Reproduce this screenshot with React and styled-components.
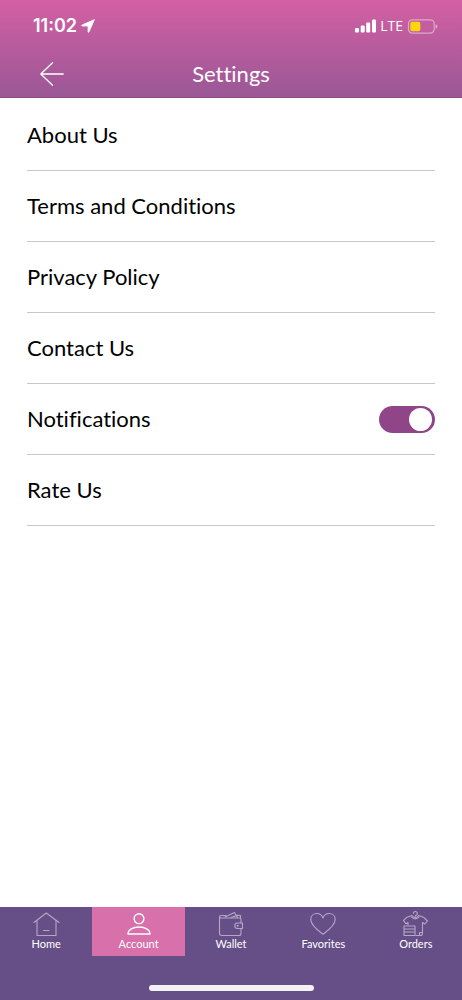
import React, { useState } from "react";
import styled, { createGlobalStyle } from "styled-components";

const GlobalStyle = createGlobalStyle`
  *, *::before, *::after { box-sizing: border-box; }
  body {
    margin: 0;
    background: #fff;
    color: #000;
    font-family: Lato, "Liberation Sans", sans-serif;
    font-variant-ligatures: none;
  }
`;

const Screen = styled.div`
  display: flex;
  flex-direction: column;
  min-height: 100vh;
`;

const Header = styled.header`
  color: #fff;
  background: linear-gradient(#d360a3, #9a5796);
  border-bottom: 1px solid #8e4c8c;
`;

const StatusBar = styled.div`
  display: flex;
  align-items: center;
  justify-content: space-between;
  height: 50px;
  padding: 2px 24px 0 33px;
`;

const StatusGroup = styled.div`
  display: flex;
  align-items: center;
  gap: 4px;
`;

const Clock = styled.span`
  font: 600 18px/24px Inter, sans-serif;
`;

const Carrier = styled.span`
  font: 400 14px/20px "Open Sans", sans-serif;
`;

const TitleBar = styled.div`
  display: grid;
  grid-template-columns: 40px 1fr 40px;
  align-items: center;
  height: 47px;
  padding: 0 32px;
`;

const BackButton = styled.button`
  display: flex;
  align-items: center;
  justify-content: center;
  height: 40px;
  padding: 0;
  border: 0;
  background: none;
  color: inherit;
  cursor: pointer;
`;

const Title = styled.h1`
  margin: 0;
  font-size: 22px;
  line-height: 28px;
  font-weight: 400;
  text-align: center;
`;

const List = styled.ul`
  flex: 1;
  margin: 0;
  padding: 2px 27px 0;
  list-style: none;
`;

const Row = styled.li`
  display: flex;
  align-items: center;
  justify-content: space-between;
  height: 71px;
  border-bottom: 1px solid #c8c8c8;
  font-size: 22px;
  line-height: 28px;
`;

const RowLink = styled.a`
  flex: 1;
  color: inherit;
  text-decoration: none;
`;

const Switch = styled.input`
  appearance: none;
  display: flex;
  align-items: center;
  justify-content: ${(p) => (p.checked ? "flex-end" : "flex-start")};
  width: 56px;
  height: 27px;
  margin: 0;
  padding: 0 3px;
  border-radius: 14px;
  background: ${(p) => (p.checked ? "#904588" : "#bbb")};
  cursor: pointer;

  &::before {
    content: "";
    width: 23px;
    height: 23px;
    border-radius: 50%;
    background: #fff;
  }
`;

const Footer = styled.footer`
  display: flex;
  flex-direction: column;
  align-items: center;
  gap: 29px;
  padding-bottom: 9px;
  background: #664f86;
`;

const Tabs = styled.nav`
  display: grid;
  grid-template-columns: repeat(5, 1fr);
  width: 100%;
`;

const Tab = styled.a`
  display: flex;
  flex-direction: column;
  align-items: center;
  height: 49px;
  padding-top: 3px;
  background: ${(p) => (p.$active ? "#d770ab" : "transparent")};
  color: #fff;
  font-size: 11px;
  line-height: 12px;
  text-decoration: none;
`;

const TabIcon = styled.svg`
  width: 28px;
  height: 28px;
  fill: none;
  stroke: ${(p) => (p.$active ? "#fff" : "#b6a6c8")};
  stroke-width: ${(p) => (p.$active ? 1.4 : 1.1)};
  stroke-linecap: round;
  stroke-linejoin: round;
`;

const HomeIndicator = styled.div`
  width: 165px;
  height: 6px;
  border-radius: 3px;
  background: #f3f1f4;
`;

const links = ["About Us", "Terms and Conditions", "Privacy Policy", "Contact Us"];

const tabs = [
  {
    label: "Home",
    icon: (
      <>
        <path d="M2 12.5 14.3 3 27 12.5" />
        <path d="M5 10.5V25.5H24V10.5M11.5 20.5H17" />
      </>
    ),
  },
  {
    label: "Account",
    icon: (
      <>
        <circle cx="14" cy="8.7" r="4.9" />
        <path d="M3 24C3 19.4 8 17 14 17s11 2.400 11 7Z" />
      </>
    ),
  },
  {
    label: "Wallet",
    icon: (
      <>
        <path d="M24 13V9.500Q24 8 22.500 8H4Q2.500 8 2.500 6.800T4 5.500H9M2.500 6.800V23Q2.500 25.500 5 25.500H22Q24 25.500 24 23.500V18.500" />
        <path d="M8 7 17.500 2.500 20.500 7.800M14 7.500 20 5.200 23.500 5.500V8" />
        <path d="M25.500 13H20.500a2.700 2.700 0 0 0 0 5.500H25.500Z" />
        <circle cx="20.700" cy="15.800" r=".5" />
      </>
    ),
  },
  {
    label: "Favorites",
    icon: (
      <path d="M14 24.300C9 20.500 1.800 15.500 1.800 9.500C1.800 5.800 4.500 3.500 7.800 3.500C10.600 3.500 13 5.200 14 8C15 5.200 17.400 3.500 20.200 3.500C23.500 3.500 26.200 5.800 26.200 9.500C26.200 15.500 19 20.500 14 24.300Z" />
    ),
  },
  {
    label: "Orders",
    icon: (
      <>
        <path d="M11.500 3.500A1.900 1.900 0 1 1 14 5.200Q13.200 5.600 13.200 6.500" />
        <path d="M6 15V12.500L4 13.800 1.500 10.500 5 7.200 10 5.500Q13.200 10 16.500 5.500L21.500 7.200 25.500 11 22.800 14 20.500 12.500V23.500Q20.500 25.500 18.500 25.500H14" />
        <path d="M9.500 7.200Q13.200 10.500 17 7.200M17.500 25.500V22.500H20.500" />
        <path d="M2 16H13V19H2ZM2 19H13V22H2ZM2 22H13V25.500H2Z" />
      </>
    ),
  },
];

function StatusIcons() {
  return (
    <StatusGroup>
      <svg width="21" height="14" viewBox="0 0 21 14" fill="#fff" aria-hidden="true">
        <rect x="0" y="9" width="4" height="4.500" rx="1" />
        <rect x="5.700" y="6.500" width="4" height="7" rx="1" />
        <rect x="11.200" y="3.500" width="4" height="10" rx="1" />
        <rect x="17" y=".5" width="4" height="13" rx="1" />
      </svg>
      <Carrier>LTE</Carrier>
      <svg width="31" height="15" viewBox="0 0 31 15" aria-hidden="true">
        <rect x="1.500" y=".8" width="25.700" height="13.400" rx="4" fill="none" stroke="#fff" strokeOpacity=".45" strokeWidth="1.200" />
        <rect x="3.300" y="2.800" width="10" height="9.400" rx="2" fill="#ffd60a" />
        <path d="M28.700 5.200Q30.400 5.800 30.400 7.500T28.700 9.800Z" fill="#fff" fillOpacity=".5" />
      </svg>
    </StatusGroup>
  );
}

export default function App() {
  const [notify, setNotify] = useState(true);

  return (
    <Screen>
      <GlobalStyle />
      <Header>
        <StatusBar>
          <StatusGroup>
            <Clock>11:02</Clock>
            <svg width="14" height="14" viewBox="0 0 13 13" fill="#fff" stroke="#fff" strokeWidth=".8" strokeLinejoin="round" aria-hidden="true">
              <path d="M12.400.6.700 5.700Q.300 6.300.9 6.500H6.200Q6.600 6.500 6.600 7V12Q6.800 12.800 7.400 12Z" />
            </svg>
          </StatusGroup>
          <StatusIcons />
        </StatusBar>
        <TitleBar>
          <BackButton type="button" aria-label="Back">
            <svg width="24" height="24" viewBox="0 0 24 24" fill="none" stroke="#fff" strokeWidth="1.300" strokeLinecap="round" strokeLinejoin="round">
              <path d="M12.500.8.800 12l11.700 11.200M.8 12H23.200" />
            </svg>
          </BackButton>
          <Title>Settings</Title>
        </TitleBar>
      </Header>

      <List>
        {links.map((text) => (
          <Row key={text}>
            <RowLink href="#">{text}</RowLink>
          </Row>
        ))}
        <Row>
          <label htmlFor="notifications">Notifications</label>
          <Switch
            id="notifications"
            type="checkbox"
            role="switch"
            checked={notify}
            onChange={(e) => setNotify(e.target.checked)}
          />
        </Row>
        <Row>
          <RowLink href="#">Rate Us</RowLink>
        </Row>
      </List>

      <Footer>
        <Tabs>
          {tabs.map(({ label, icon }) => {
            const active = label === "Account";
            return (
              <Tab key={label} href="#" $active={active} aria-current={active ? "page" : undefined}>
                <TabIcon viewBox="0 0 28 28" $active={active} aria-hidden="true">
                  {icon}
                </TabIcon>
                {label}
              </Tab>
            );
          })}
        </Tabs>
        <HomeIndicator />
      </Footer>
    </Screen>
  );
}
